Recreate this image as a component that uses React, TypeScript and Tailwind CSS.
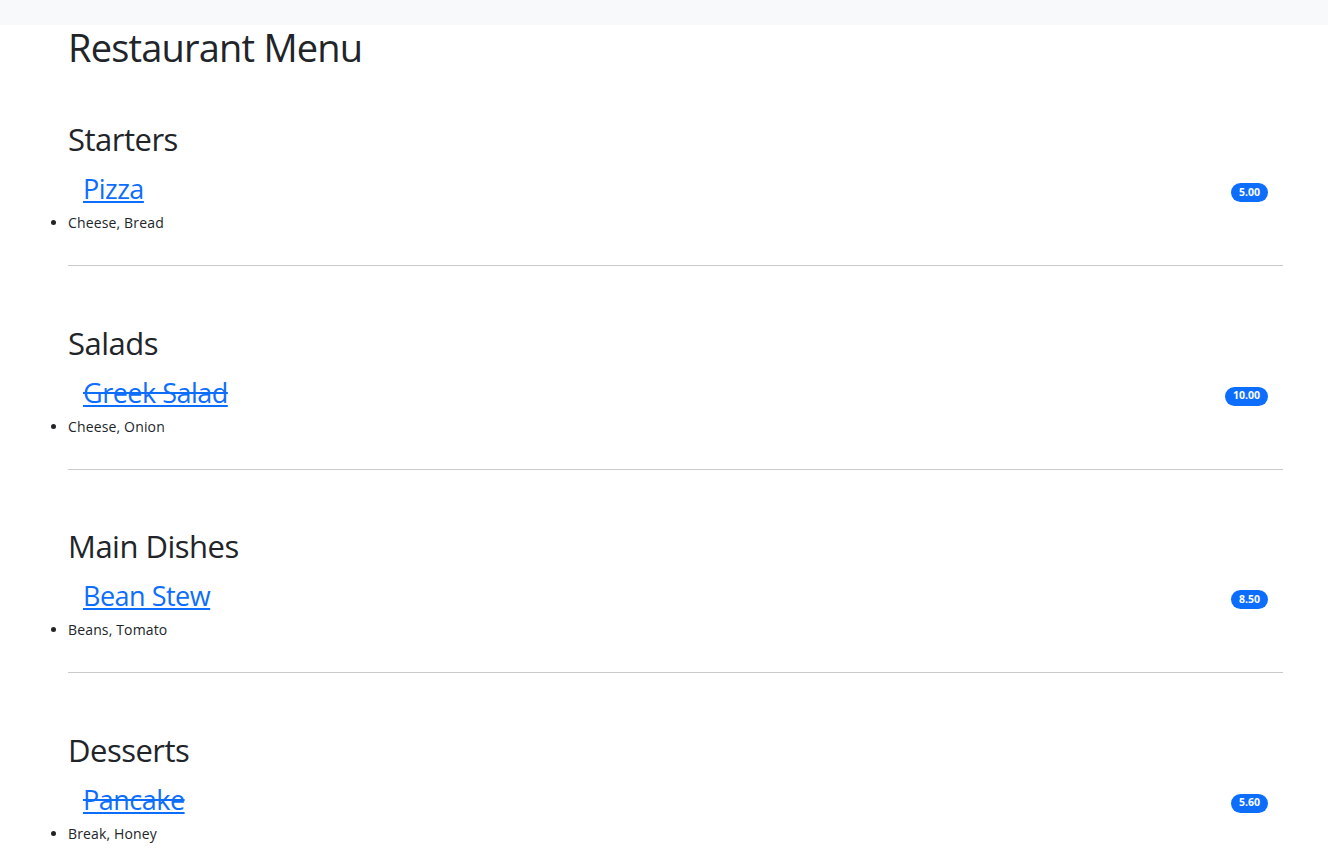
const menu = [
    { category: "Starters", name: "Pizza", price: "5.00", ingredients: "Cheese, Bread", soldOut: false },
    { category: "Salads", name: "Greek Salad", price: "10.00", ingredients: "Cheese, Onion", soldOut: true },
    { category: "Main Dishes", name: "Bean Stew", price: "8.50", ingredients: "Beans, Tomato", soldOut: false },
    { category: "Desserts", name: "Pancake", price: "5.60", ingredients: "Break, Honey", soldOut: true },
]

const App = () => {
    return (
        <div className="min-h-screen bg-white text-[#212529] font-['Open_Sans',sans-serif]">
            <div className="h-[25px] bg-[#f8f9fa]"></div>
            <main className="pl-[68px] pr-[45px]">
                <h1 className="text-[38px] leading-[44px] tracking-[-0.8px]">Restaurant Menu</h1>
                <div className="h-[51px]"></div>
                {menu.map((item) => (
                    <section key={item.category}>
                        <h2 className="text-[31px] leading-[38px] tracking-[-0.5px] mb-[14px]">{item.category}</h2>
                        <div className="flex justify-between items-start px-[15px]">
                            <a
                                href="#"
                                className={
                                    item.soldOut
                                        ? "text-[27px] leading-[34px] tracking-[-0.5px] text-[#0d6efd] [text-decoration-line:underline_line-through]"
                                        : "text-[27px] leading-[34px] tracking-[-0.5px] text-[#0d6efd] underline"
                                }
                            >
                                {item.name}
                            </a>
                            <span className="mt-[11px] h-[19px] px-[8px] rounded-full bg-[#0d6efd] text-white text-[10.5px] font-bold flex items-center">
                                {item.price}
                            </span>
                        </div>
                        <ul className="list-disc mt-[6px] text-[14px] leading-[21px] tracking-[0.15px]">
                            <li>{item.ingredients}</li>
                        </ul>
                        <hr className="mt-[32px] mb-[57.5px] border-0 border-t border-[#c9cacb]" />
                    </section>
                ))}
            </main>
        </div>
    )
}

export default App
